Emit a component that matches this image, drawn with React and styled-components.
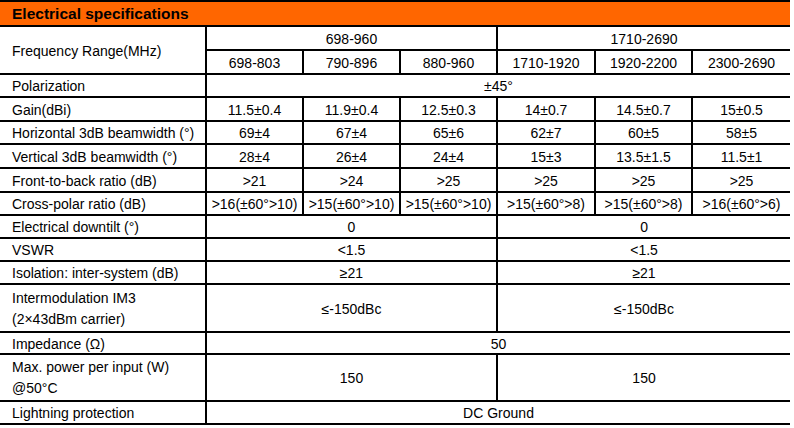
import styled, { createGlobalStyle } from 'styled-components';

const GlobalStyle = createGlobalStyle`
  body {
    margin: 0;
    background: #fff;
    font-family: "Liberation Sans", Arial, sans-serif;
    color: #000;
  }
`;

const Sheet = styled.table`
  width: 790px;
  border-collapse: collapse;
  table-layout: fixed;
  font-size: 14px;
  border-top: 2px solid #000;
`;

const TitleCell = styled.th`
  height: 23px;
  padding: 0 0 0 12px;
  background: #ff6600;
  text-align: left;
  font-size: 15.5px;
  line-height: 18px;
  font-weight: bold;
  border-bottom: 2px solid #000;
`;

const LabelCell = styled.td`
  height: ${({ $h }) => $h || 20}px;
  padding: 1px 0 0 12px;
  text-align: left;
  line-height: ${({ $tall }) => ($tall ? 21 : 18)}px;
  border-bottom: 2px solid #000;
  border-right: 2px solid #000;
  white-space: nowrap;
`;

const ValueCell = styled.td`
  height: ${({ $h }) => $h || 20}px;
  padding: 1px 0 0;
  text-align: center;
  line-height: 18px;
  border-bottom: 2px solid #000;
  border-right: ${({ $last }) => ($last ? 'none' : '2px solid #000')};
  white-space: nowrap;
`;

const bands = ['698-803', '790-896', '880-960', '1710-1920', '1920-2200', '2300-2690'];

const perBand = [
  ['Gain(dBi)', 21, ['11.5±0.4', '11.9±0.4', '12.5±0.3', '14±0.7', '14.5±0.7', '15±0.5']],
  ['Horizontal 3dB beamwidth (°)', 20, ['69±4', '67±4', '65±6', '62±7', '60±5', '58±5']],
  ['Vertical 3dB beamwidth (°)', 21, ['28±4', '26±4', '24±4', '15±3', '13.5±1.5', '11.5±1']],
  ['Front-to-back ratio (dB)', 21, ['>21', '>24', '>25', '>25', '>25', '>25']],
  [
    'Cross-polar ratio (dB)',
    20,
    ['>16(±60°>10)', '>15(±60°>10)', '>15(±60°>10)', '>15(±60°>8)', '>15(±60°>8)', '>16(±60°>6)'],
  ],
];

const perRange = [
  ['Electrical downtilt (°)', '0', '0'],
  ['VSWR', '<1.5', '<1.5'],
  ['Isolation: inter-system (dB)', '≥21', '≥21'],
];

const App = () => (
  <>
    <GlobalStyle />
    <Sheet>
      <colgroup>
        <col style={{ width: 206 }} />
        <col style={{ width: 97 }} />
        <col style={{ width: 97 }} />
        <col style={{ width: 97 }} />
        <col style={{ width: 98 }} />
        <col style={{ width: 97 }} />
        <col style={{ width: 98 }} />
      </colgroup>
      <thead>
        <tr>
          <TitleCell colSpan={7}>Electrical specifications</TitleCell>
        </tr>
      </thead>
      <tbody>
        <tr>
          <LabelCell rowSpan={2}>Frequency Range(MHz)</LabelCell>
          <ValueCell colSpan={3} $h={21}>698-960</ValueCell>
          <ValueCell colSpan={3} $h={21} $last>1710-2690</ValueCell>
        </tr>
        <tr>
          {bands.map((b, i) => (
            <ValueCell key={b} $h={21} $last={i === bands.length - 1}>
              {b}
            </ValueCell>
          ))}
        </tr>
        <tr>
          <LabelCell>Polarization</LabelCell>
          <ValueCell colSpan={6} $last>±45°</ValueCell>
        </tr>
        {perBand.map(([label, h, values]) => (
          <tr key={label}>
            <LabelCell $h={h}>{label}</LabelCell>
            {values.map((v, i) => (
              <ValueCell key={i} $h={h} $last={i === values.length - 1}>
                {v}
              </ValueCell>
            ))}
          </tr>
        ))}
        {perRange.map(([label, low, high]) => (
          <tr key={label}>
            <LabelCell>{label}</LabelCell>
            <ValueCell colSpan={3}>{low}</ValueCell>
            <ValueCell colSpan={3} $last>{high}</ValueCell>
          </tr>
        ))}
        <tr>
          <LabelCell $h={45} $tall>
            Intermodulation IM3
            <br />
            (2×43dBm carrier)
          </LabelCell>
          <ValueCell colSpan={3} $h={45}>≤-150dBc</ValueCell>
          <ValueCell colSpan={3} $h={45} $last>≤-150dBc</ValueCell>
        </tr>
        <tr>
          <LabelCell $h={19}>Impedance (Ω)</LabelCell>
          <ValueCell colSpan={6} $h={19} $last>50</ValueCell>
        </tr>
        <tr>
          <LabelCell $h={44} $tall>
            Max. power per input (W)
            <br />
            @50°C
          </LabelCell>
          <ValueCell colSpan={3} $h={44}>150</ValueCell>
          <ValueCell colSpan={3} $h={44} $last>150</ValueCell>
        </tr>
        <tr>
          <LabelCell>Lightning protection</LabelCell>
          <ValueCell colSpan={6} $last>DC Ground</ValueCell>
        </tr>
      </tbody>
    </Sheet>
  </>
);

export default App;
